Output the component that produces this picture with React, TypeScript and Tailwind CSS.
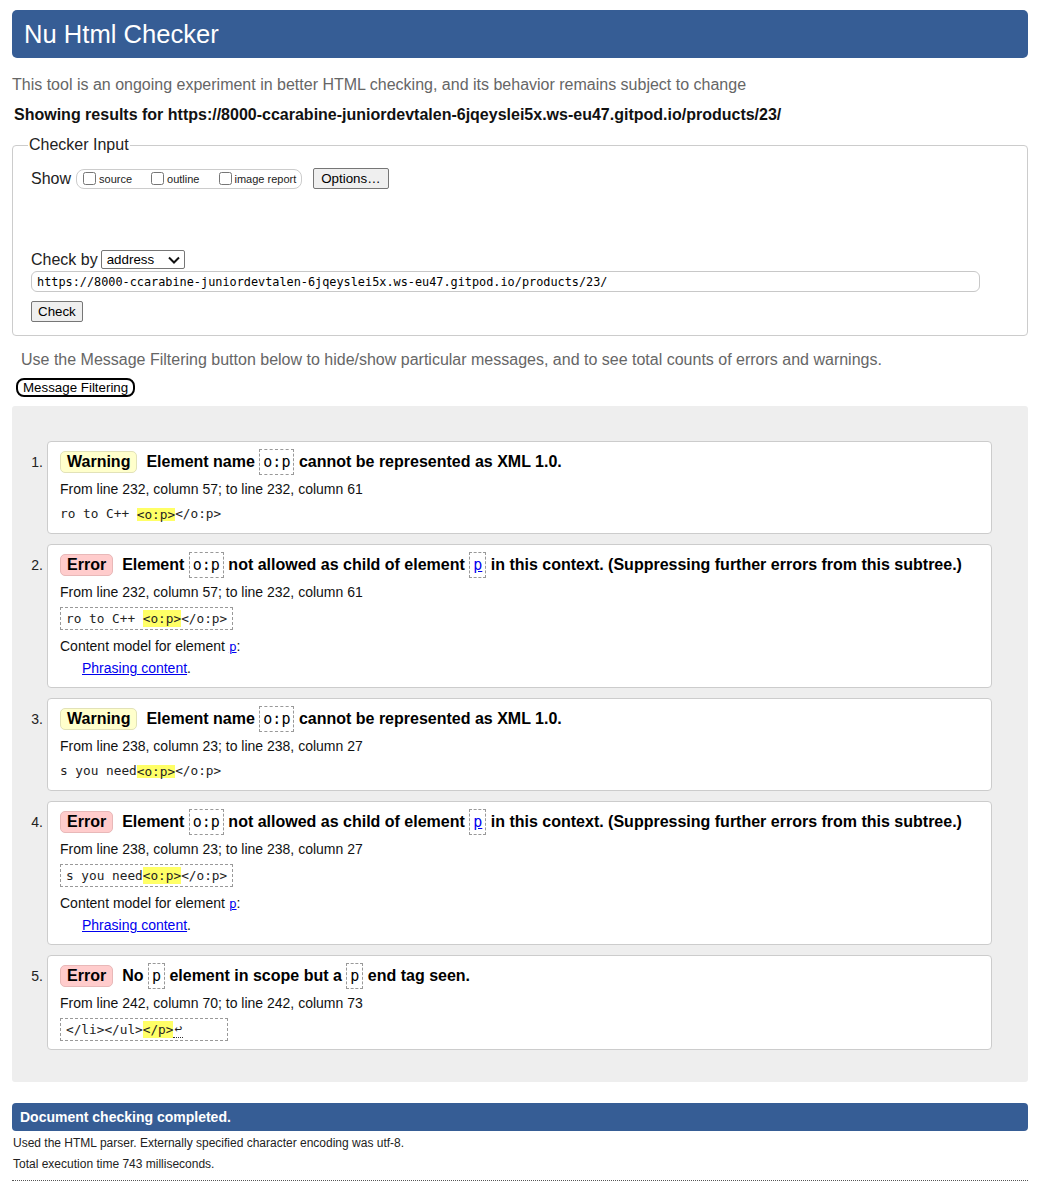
import React from "react";

type Seg = string | { code: string; link?: boolean };

function Code({ text, link }: { text: string; link?: boolean }) {
  return (
    <span
      className={`inline-flex items-center h-[26px] border border-dashed border-[#999] px-[3px] text-[15px] font-normal font-['DejaVu_Sans_Mono','Liberation_Mono',monospace] ${
        link ? "text-[#0000ee] underline" : "text-black"
      }`}
    >
      {text}
    </span>
  );
}

function Badge({ kind }: { kind: "Warning" | "Error" }) {
  return (
    <span
      className={`inline-flex items-center h-[22px] px-[6px] rounded-[5px] border font-bold text-[16px] ${
        kind === "Warning" ? "bg-[#ffffcc] border-[#e2e2b8]" : "bg-[#ffcccc] border-[#e8b8b8]"
      }`}
    >
      {kind}
    </span>
  );
}

type Msg = {
  kind: "Warning" | "Error";
  title: Seg[];
  from: string;
  pre: string;
  hl: string;
  post: string;
  boxed: boolean;
  content?: boolean;
  newline?: boolean;
};

const messages: Msg[] = [
  {
    kind: "Warning",
    title: ["Element name ", { code: "o:p" }, " cannot be represented as XML 1.0."],
    from: "From line 232, column 57; to line 232, column 61",
    pre: "ro to C++ ",
    hl: "<o:p>",
    post: "</o:p>",
    boxed: false,
  },
  {
    kind: "Error",
    title: [
      "Element ",
      { code: "o:p" },
      " not allowed as child of element ",
      { code: "p", link: true },
      " in this context. (Suppressing further errors from this subtree.)",
    ],
    from: "From line 232, column 57; to line 232, column 61",
    pre: "ro to C++ ",
    hl: "<o:p>",
    post: "</o:p>",
    boxed: true,
    content: true,
  },
  {
    kind: "Warning",
    title: ["Element name ", { code: "o:p" }, " cannot be represented as XML 1.0."],
    from: "From line 238, column 23; to line 238, column 27",
    pre: "s you need",
    hl: "<o:p>",
    post: "</o:p>",
    boxed: false,
  },
  {
    kind: "Error",
    title: [
      "Element ",
      { code: "o:p" },
      " not allowed as child of element ",
      { code: "p", link: true },
      " in this context. (Suppressing further errors from this subtree.)",
    ],
    from: "From line 238, column 23; to line 238, column 27",
    pre: "s you need",
    hl: "<o:p>",
    post: "</o:p>",
    boxed: true,
    content: true,
  },
  {
    kind: "Error",
    title: ["No ", { code: "p" }, " element in scope but a ", { code: "p" }, " end tag seen."],
    from: "From line 242, column 70; to line 242, column 73",
    pre: "</li></ul>",
    hl: "</p>",
    post: "",
    boxed: true,
    newline: true,
  },
];

function Message({ m, n }: { m: Msg; n: number }) {
  const mono = "font-['DejaVu_Sans_Mono','Liberation_Mono',monospace]";
  return (
    <li className="flex">
      <div className="w-[35px] shrink-0 pr-[4px] pt-[12px] text-right text-[14px] leading-[18px] text-[#222]">
        {n}.
      </div>
      <div
        className={`flex-1 bg-white border border-[#cccccc] rounded-[4px] pl-[12px] pt-[7px] ${
          m.newline ? "pb-[8px]" : m.content ? "pb-[10px]" : "pb-[9px]"
        }`}
      >
        <div className="flex items-center h-[26px] whitespace-pre text-[16px] font-bold text-black">
          <Badge kind={m.kind} />
          <span className="ml-[9px]">{""}</span>
          {m.title.map((s, i) =>
            typeof s === "string" ? (
              <span key={i}>{s}</span>
            ) : (
              <Code key={i} text={s.code} link={s.link} />
            )
          )}
        </div>
        <div className="mt-[5px] h-[18px] text-[14px] leading-[18px] text-[#111]">{m.from}</div>
        {m.boxed ? (
          <div
            className={`mt-[6px] h-[23px] flex items-center border border-dashed border-[#999] px-[5px] whitespace-pre text-[12.75px] text-[#222] ${mono} ${
              m.newline ? "w-[168px]" : "w-fit"
            }`}
          >
            <span>{m.pre}</span>
            <span className="inline-block h-[17px] leading-[17px] bg-[#ffff66]">{m.hl}</span>
            <span>{m.post}</span>
            {m.newline && (
              <span className="inline-block h-[17px] leading-[15px] border-b border-dotted border-[#333] px-[1px]">
                ↩
              </span>
            )}
          </div>
        ) : (
          <div className={`mt-[6px] h-[20px] flex items-center whitespace-pre text-[12.75px] text-[#222] ${mono}`}>
            <span>{m.pre}</span>
            <span className="inline-block h-[13px] leading-[13px] bg-[#ffff66]">{m.hl}</span>
            <span>{m.post}</span>
          </div>
        )}
        {m.content && (
          <>
            <div className="mt-[7px] h-[18px] flex items-baseline whitespace-pre text-[14px] leading-[18px] text-[#111]">
              <span>Content model for element </span>
              <a className={`text-[#0000ee] underline text-[12.75px] leading-[18px] ${mono}`}>p</a>
              <span>:</span>
            </div>
            <div className="mt-[4px] h-[18px] ml-[22px] text-[14px] leading-[18px] text-[#111]">
              <a className="text-[#0000ee] underline">Phrasing content</a>.
            </div>
          </>
        )}
      </div>
    </li>
  );
}

export default function App() {
  return (
    <div className="bg-white min-h-[1200px] text-black font-['Liberation_Sans',Arial,sans-serif]">
      <div className="w-[1016px] ml-[12px] pt-[10px] pb-[20px]">
        <div className="h-[48px] bg-[#365d95] rounded-[5px] flex items-center pl-[12px]">
          <h1 className="text-[25.6px] leading-[30px] text-white font-normal">Nu Html Checker</h1>
        </div>
        <p className="mt-[17px] text-[16px] leading-[20px] text-[#666]">
          This tool is an ongoing experiment in better HTML checking, and its behavior remains subject to change
        </p>
        <p className="mt-[10px] pl-[2px] text-[16px] leading-[20px] font-bold text-[#111]">
          Showing results for https://8000-ccarabine-juniordevtalen-6jqeyslei5x.ws-eu47.gitpod.io/products/23/
        </p>

        <fieldset className="mt-[10px] border border-[#cccccc] rounded-[4px] pl-[18px] pb-[13px]">
          <legend className="ml-[-3px] px-[1px] text-[16px] leading-[20px] text-[#222]">Checker Input</legend>
          <div className="mt-[13px] flex items-center h-[21px]">
            <span className="text-[16px] text-[#222]">Show</span>
            <div className="ml-[5px] flex items-center h-[20px] border border-[#cccccc] rounded-[8px] pl-[6px] pr-[5px] text-[11px] text-[#222]">
              <label className="flex items-center">
                <input type="checkbox" className="m-0 w-[13px] h-[13px]" />
                <span className="ml-[3px] mt-[2px]">source</span>
              </label>
              <label className="flex items-center ml-[19px]">
                <input type="checkbox" className="m-0 w-[13px] h-[13px]" />
                <span className="ml-[3px] mt-[2px]">outline</span>
              </label>
              <label className="flex items-center ml-[20px]">
                <input type="checkbox" className="m-0 w-[13px] h-[13px]" />
                <span className="ml-[2px] mt-[2px]">image report</span>
              </label>
            </div>
            <button className="ml-[11px] h-[21px] px-[7px] bg-[#efefef] border border-[#767676] rounded-[2px] text-[13.33px] text-black">
              Options…
            </button>
          </div>
          <div className="mt-[61px] flex items-center h-[19px]">
            <span className="text-[16px] text-[#222]">Check by</span>
            <div className="ml-[3px] w-[84px] h-[19px] flex items-center justify-between border border-[#767676] rounded-[2px] bg-white pl-[5px] pr-[4px] text-[13.33px] text-black">
              <span>address</span>
              <svg width="12" height="8" viewBox="0 0 12 8" className="shrink-0">
                <polyline points="1,1.5 6,6.5 11,1.5" fill="none" stroke="#111" strokeWidth="2" />
              </svg>
            </div>
          </div>
          <input
            readOnly
            value="https://8000-ccarabine-juniordevtalen-6jqeyslei5x.ws-eu47.gitpod.io/products/23/"
            className="block mt-[2px] w-[949px] h-[21px] border border-[#c8c8c8] rounded-[6px] px-[5px] text-[11.85px] text-black font-['DejaVu_Sans_Mono','Liberation_Mono',monospace] outline-none"
          />
          <button className="block mt-[9px] h-[21px] px-[6px] bg-[#efefef] border border-[#767676] rounded-[2px] text-[13.33px] text-black">
            Check
          </button>
        </fieldset>

        <p className="mt-[14px] ml-[9px] text-[16px] leading-[20px] text-[#666]">
          Use the Message Filtering button below to hide/show particular messages, and to see total counts of errors and warnings.
        </p>
        <button className="block mt-[8px] ml-[4px] h-[19px] px-[5px] border-2 border-black rounded-[8px] bg-white text-[13.33px] leading-[15px] text-black">
          Message Filtering
        </button>

        <div className="mt-[9px] bg-[#eeeeee] rounded-[3px] pt-[35px] pb-[32px] pr-[36px]">
          <ol className="flex flex-col gap-[10px]">
            {messages.map((m, i) => (
              <Message key={i} m={m} n={i + 1} />
            ))}
          </ol>
        </div>

        <div className="mt-[21px] h-[28px] bg-[#365d95] rounded-[4px] flex items-center pl-[8px]">
          <span className="text-[14px] font-bold text-white">Document checking completed.</span>
        </div>
        <p className="mt-[4px] pl-[1px] text-[12px] leading-[16px] text-[#222]">
          Used the HTML parser. Externally specified character encoding was utf-8.
        </p>
        <p className="mt-[5px] pl-[1px] text-[12px] leading-[16px] text-[#222]">
          Total execution time 743 milliseconds.
        </p>
        <div className="mt-[8px] border-t border-dotted border-[#555]" />
      </div>
    </div>
  );
}
